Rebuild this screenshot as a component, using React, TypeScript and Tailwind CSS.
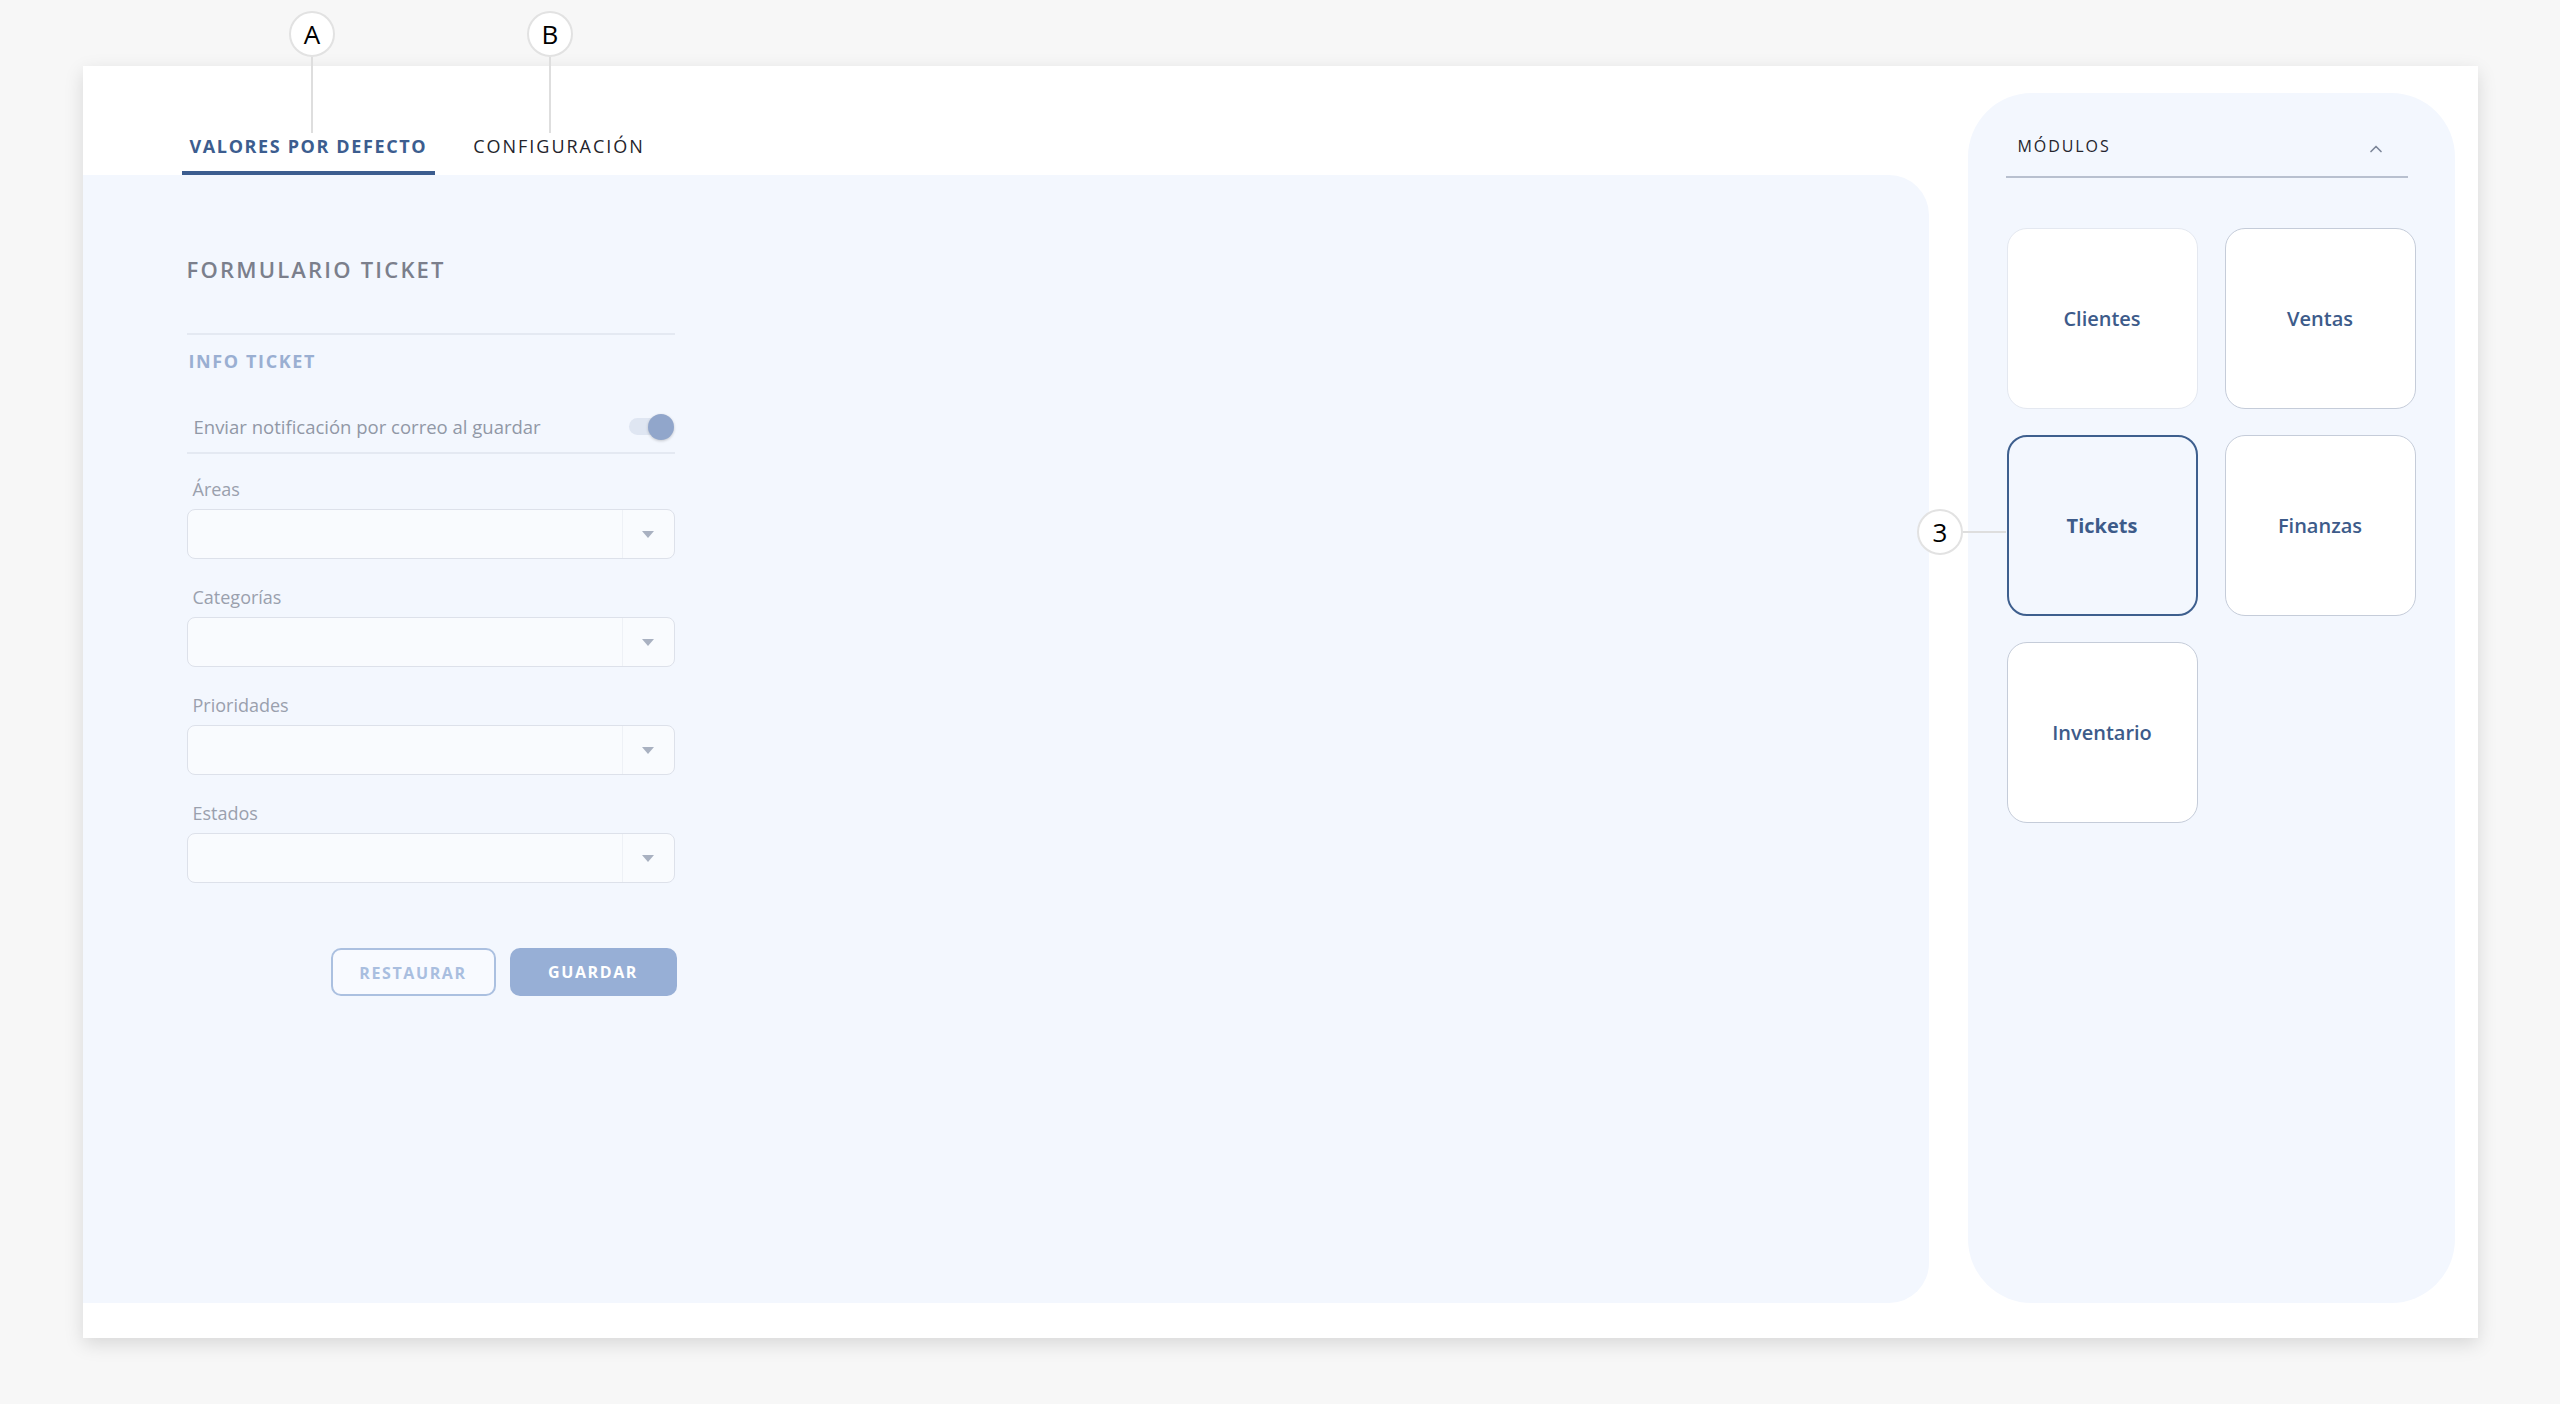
import { ChevronUp } from "lucide-react"

const fields = ["Áreas", "Categorías", "Prioridades", "Estados"]

const modules = [
  { name: "Clientes", border: "border border-[#e4e8f0] bg-white font-semibold" },
  { name: "Ventas", border: "border border-[#c5ccd9] bg-white font-semibold" },
  { name: "Tickets", border: "border-2 border-[#3e5f8e] bg-[#f3f7fe] font-bold" },
  { name: "Finanzas", border: "border border-[#c5ccd9] bg-white font-semibold" },
  { name: "Inventario", border: "border border-[#c5ccd9] bg-white font-semibold" },
]

function Marker({ label, className }: { label: string; className: string }) {
  return (
    <div
      className={`absolute w-[46px] h-[46px] rounded-full bg-white border-2 border-[#e2e2e2] flex items-center justify-center text-[26px] leading-none text-black ${className}`}
    >
      {label}
    </div>
  )
}

function SelectField({ label }: { label: string }) {
  return (
    <div className="flex flex-col gap-[8px]">
      <span className="pl-[6px] text-[18px] leading-[24px] text-[#9aa0ad]">{label}</span>
      <div className="h-[50px] rounded-[8px] border border-[#dde1ea] bg-[#f9fbfe] flex">
        <div className="flex-1" />
        <div className="w-[52px] border-l border-[#eef1f6] flex items-center justify-center">
          <svg width="12" height="7" viewBox="0 0 12 7">
            <polygon points="0,0 12,0 6,7" fill="#a9b1c1" />
          </svg>
        </div>
      </div>
    </div>
  )
}

export default function App() {
  return (
    <div className="relative min-h-screen bg-[#f7f7f7] pt-[66px] pb-[66px] font-['Open_Sans',sans-serif]">
      <div className="mx-auto w-[2395px] h-[1272px] bg-white shadow-[0_6px_18px_rgba(0,0,0,0.13)] flex pb-[35px]">
        {/* main column: tabs + form */}
        <div className="flex-1 flex flex-col">
          <div className="h-[109px] flex items-end pl-[99px] gap-[30px]">
            <div className="px-[8px] pb-[13px] border-b-[4px] border-[#3c5d8f] text-[18px] leading-[24px] font-bold tracking-[0.09em] text-[#3c5d8f]">
              VALORES POR DEFECTO
            </div>
            <div className="px-[8px] pb-[13px] border-b-[4px] border-transparent text-[18px] leading-[24px] tracking-[0.11em] text-[#23232b]">
              CONFIGURACIÓN
            </div>
          </div>

          <div className="flex-1 bg-[#f3f7fe] rounded-r-[40px] pl-[104px] pt-[79px]">
            <div className="w-[488px] flex flex-col">
              <h2 className="text-[22px] leading-[30px] font-semibold tracking-[0.1em] text-[#7b7f8c]">
                FORMULARIO TICKET
              </h2>
              <div className="mt-[49px] h-[2px] bg-[#e4e9f2]" />
              <h3 className="mt-[14px] pl-[2px] text-[18px] leading-[24px] font-bold tracking-[0.09em] text-[#9aafd2]">
                INFO TICKET
              </h3>

              <div className="mt-[41px] flex items-center justify-between pl-[7px]">
                <span className="text-[18.5px] leading-[24px] text-[#9198a6]">
                  Enviar notificación por correo al guardar
                </span>
                <div className="relative w-[45px] h-[26px] mr-[1px]">
                  <div className="absolute left-0 top-[4px] w-[39px] h-[17px] rounded-full bg-[#dfe6f2]" />
                  <div className="absolute right-0 top-0 w-[26px] h-[26px] rounded-full bg-[#91a6cb] shadow-[0_1px_3px_rgba(0,0,0,0.2)]" />
                </div>
              </div>
              <div className="mt-[12px] h-[2px] bg-[#e4e9f2]" />

              <div className="mt-[23px] flex flex-col gap-[26px]">
                {fields.map((f) => (
                  <SelectField key={f} label={f} />
                ))}
              </div>

              <div className="mt-[65px] flex justify-end gap-[14px] -mr-[2px]">
                <button className="w-[165px] h-[48px] rounded-[10px] border-2 border-[#abc0e0] bg-[#f8faff] text-[16px] font-bold tracking-[0.1em] text-[#a9bedf] pt-[2px]">
                  RESTAURAR
                </button>
                <button className="w-[167px] h-[48px] rounded-[10px] bg-[#97afd6] text-[16px] font-bold tracking-[0.1em] text-white">
                  GUARDAR
                </button>
              </div>
            </div>
          </div>
        </div>

        {/* module picker */}
        <aside className="w-[487px] mt-[27px] ml-[39px] mr-[23px] rounded-[64px] bg-[#f3f7fe] pt-[40px] pl-[38px] pr-[38px]">
          <div className="mr-[9px] border-b-2 border-[#b8c0cf] pl-[12px] pr-[22px] pb-[17px] flex items-center justify-between">
            <span className="text-[16px] leading-[22px] font-medium tracking-[0.12em] text-[#25252d]">
              MÓDULOS
            </span>
            <ChevronUp className="w-[20px] h-[20px] mt-[6px] text-[#7d8699]" strokeWidth={2} />
          </div>

          <div className="mt-[50px] ml-[1px] grid grid-cols-[191px_191px] gap-x-[27px] gap-y-[26px]">
            {modules.map((m) => (
              <div
                key={m.name}
                className={`h-[181px] rounded-[20px] flex items-center justify-center text-[20px] text-[#3d5b8a] ${m.border}`}
              >
                {m.name}
              </div>
            ))}
          </div>
        </aside>
      </div>

      {/* callout markers */}
      <Marker label="A" className="left-[289px] top-[11px]" />
      <div className="absolute left-[311px] top-[57px] w-[2px] h-[76px] bg-[#dedede]" />
      <Marker label="B" className="left-[527px] top-[11px]" />
      <div className="absolute left-[549px] top-[57px] w-[2px] h-[76px] bg-[#dedede]" />
      <Marker label="3" className="left-[1917px] top-[509px]" />
      <div className="absolute left-[1963px] top-[531px] w-[43px] h-[2px] bg-[#dedede]" />
    </div>
  )
}
